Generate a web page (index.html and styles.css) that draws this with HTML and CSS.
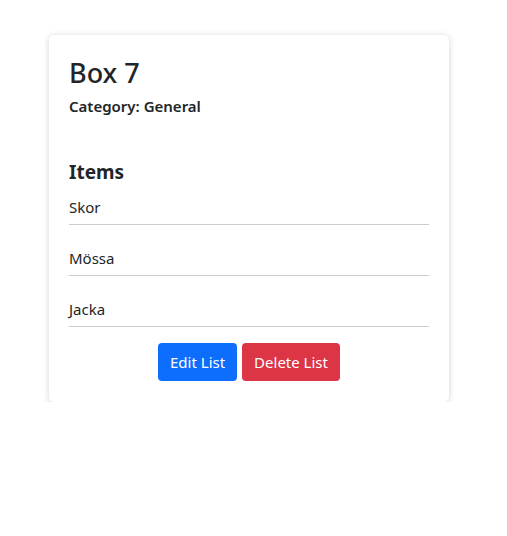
FILE: index.html
```html
<!DOCTYPE html>
<html>
<head>
<meta charset="utf-8">
<link rel="stylesheet" href="styles.css">
</head>
<body>
<div class="page">
  <div class="card">
    <h2 class="title">Box 7</h2>
    <p class="category">Category: General</p>
    <h4 class="items-title">Items</h4>
    <ul class="items">
      <li class="item">Skor</li>
      <li class="item">Mössa</li>
      <li class="item">Jacka</li>
    </ul>
    <div class="actions">
      <button class="btn btn-primary">Edit List</button>
      <button class="btn btn-danger">Delete List</button>
    </div>
  </div>
</div>
</body>
</html>
```
FILE: styles.css
```css
html, body {
  margin: 0;
  padding: 0;
  background: #fff;
}
body {
  font-family: "Noto Sans", "Open Sans", sans-serif;
  color: #212529;
  font-size: 15px;
}
.page {
  padding: 35px 0 0 49px;
}
.card {
  width: 400px;
  box-sizing: border-box;
  padding: 20px 20px 21px 20px;
  border-radius: 5px;
  box-shadow: 0 1px 6px rgba(0,0,0,0.18);
  background: #fff;
}
.title {
  margin: 0;
  font-size: 27px;
  font-weight: 500;
  line-height: 36px;
}
.category {
  margin: 4px 0 0;
  font-weight: 600;
  font-size: 15px;
  line-height: 22px;
}
.items-title {
  margin: 41px 0 0;
  font-size: 19px;
  font-weight: 700;
  line-height: 28px;
}
.items {
  list-style: none;
  margin: 4px 0 0;
  padding: 0;
}
.item {
  font-size: 15px;
  line-height: 22px;
  padding: 6px 0 6px;
  border-bottom: 1px solid #ccc;
  margin-bottom: 16px;
}
.actions {
  display: flex;
  justify-content: center;
  gap: 5px;
}
.btn {
  font-family: inherit;
  font-size: 15px;
  line-height: 22px;
  padding: 8px 12px;
  border: none;
  border-radius: 4px;
  color: #fff;
}
.btn-primary { background: #0d6efd; }
.btn-danger { background: #dc3545; }
```
